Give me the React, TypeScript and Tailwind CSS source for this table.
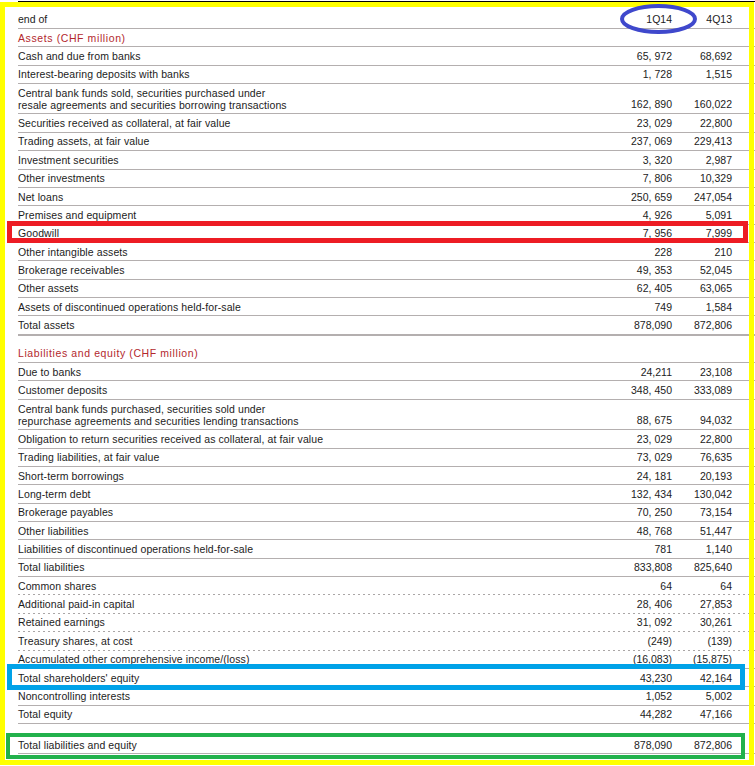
import React from "react";

type Line = "solid" | "thick" | "dotted";

type Row =
  | { type: "head" }
  | { type: "section"; label: string }
  | { type: "gap"; h: string }
  | {
      type: "item";
      label: string[];
      a: string;
      b: string;
      line?: Line;
      gap?: boolean;
    };

const item = (label: string | string[], a: string, b: string, opts: { line?: Line; gap?: boolean } = {}): Row => ({
  type: "item",
  label: Array.isArray(label) ? label : [label],
  a,
  b,
  ...opts,
});

const rows: Row[] = [
  { type: "head" },
  { type: "section", label: "Assets (CHF million)" },
  item("Cash and due from banks", "65,972", "68,692", { gap: true }),
  item("Interest-bearing deposits with banks", "1,728", "1,515", { gap: true }),
  item(
    ["Central bank funds sold, securities purchased under", "resale agreements and securities borrowing transactions"],
    "162,890",
    "160,022",
    { gap: true }
  ),
  item("Securities received as collateral, at fair value", "23,029", "22,800", { gap: true }),
  item("Trading assets, at fair value", "237,069", "229,413", { gap: true }),
  item("Investment securities", "3,320", "2,987", { gap: true }),
  item("Other investments", "7,806", "10,329", { gap: true }),
  item("Net loans", "250,659", "247,054", { gap: true }),
  item("Premises and equipment", "4,926", "5,091", { gap: true }),
  item("Goodwill", "7,956", "7,999", { gap: true }),
  item("Other intangible assets", "228", "210"),
  item("Brokerage receivables", "49,353", "52,045", { gap: true }),
  item("Other assets", "62,405", "63,065", { gap: true }),
  item("Assets of discontinued operations held-for-sale", "749", "1,584"),
  item("Total assets", "878,090", "872,806", { line: "thick" }),
  { type: "gap", h: "h-[9px]" },
  { type: "section", label: "Liabilities and equity (CHF million)" },
  item("Due to banks", "24,211", "23,108"),
  item("Customer deposits", "348,450", "333,089", { gap: true }),
  item(
    ["Central bank funds purchased, securities sold under", "repurchase agreements and securities lending transactions"],
    "88,675",
    "94,032",
    { gap: true }
  ),
  item("Obligation to return securities received as collateral, at fair value", "23,029", "22,800", { gap: true }),
  item("Trading liabilities, at fair value", "73,029", "76,635", { gap: true }),
  item("Short-term borrowings", "24,181", "20,193", { gap: true }),
  item("Long-term debt", "132,434", "130,042", { gap: true }),
  item("Brokerage payables", "70,250", "73,154", { gap: true }),
  item("Other liabilities", "48,768", "51,447", { gap: true }),
  item("Liabilities of discontinued operations held-for-sale", "781", "1,140"),
  item("Total liabilities", "833,808", "825,640"),
  item("Common shares", "64", "64", { line: "dotted" }),
  item("Additional paid-in capital", "28,406", "27,853", { line: "dotted", gap: true }),
  item("Retained earnings", "31,092", "30,261", { line: "dotted", gap: true }),
  item("Treasury shares, at cost", "(249)", "(139)", { line: "dotted" }),
  item("Accumulated other comprehensive income/(loss)", "(16,083)", "(15,875)"),
  item("Total shareholders' equity", "43,230", "42,164"),
  item("Noncontrolling interests", "1,052", "5,002"),
  item("Total equity", "44,282", "47,166"),
  { type: "gap", h: "h-[12px]" },
  item("Total liabilities and equity", "878,090", "872,806"),
];

function Separator({ line = "solid" }: { line?: Line }) {
  if (line === "dotted") {
    return (
      <div className="h-px bg-[linear-gradient(90deg,#aaa6a6_40%,transparent_40%)] bg-[length:5px_1px] bg-repeat-x" />
    );
  }
  return <div className={line === "thick" ? "h-[2px] bg-[#b4afaf]" : "h-px bg-[#b4afaf]"} />;
}

// numbers in the first column render with a small gap after the comma
function Num({ value, gap }: { value: string; gap?: boolean }) {
  if (!gap || !value.includes(",")) return <>{value}</>;
  const [head, tail] = value.split(",");
  return (
    <>
      {head}
      <span className="mr-[3px]">,</span>
      {tail}
    </>
  );
}

function TableRow({ row }: { row: Row }) {
  if (row.type === "gap") return <div className={row.h} />;

  if (row.type === "head") {
    return (
      <>
        <div className="flex h-[26px] items-end pb-[3px] pr-[23px] leading-[12px]">
          <div className="flex-1">end of</div>
          <div className="w-[80px] text-right">1Q14</div>
          <div className="w-[60px] text-right">4Q13</div>
        </div>
        <Separator />
      </>
    );
  }

  if (row.type === "section") {
    return (
      <>
        <div className="flex h-[17.36px] items-center leading-[12px] tracking-[0.6px] text-[#b3282d]">
          {row.label}
        </div>
        <Separator />
      </>
    );
  }

  const double = row.label.length > 1;
  const thick = row.line === "thick";
  return (
    <>
      <div
        className={`flex items-center pr-[23px] leading-[12px] ${
          double ? "h-[29.36px]" : "h-[17.36px]"
        }`}
      >
        <div className="flex-1 tracking-[0.1px]">
          {row.label.map((l) => (
            <div key={l}>{l}</div>
          ))}
        </div>
        <div className={`w-[80px] text-right ${double ? "self-end pb-[3px]" : ""}`}>
          <Num value={row.a} gap={row.gap} />
        </div>
        <div className={`w-[60px] text-right ${double ? "self-end pb-[3px]" : ""}`}>{row.b}</div>
      </div>
      <Separator line={thick ? "thick" : row.line} />
    </>
  );
}

export default function App() {
  return (
    <div className="relative h-[766px] w-[755px] overflow-hidden bg-white font-['Liberation_Sans',Arial,sans-serif] text-[10.5px] text-[#1c1c1c]">
      <div className="ml-[18px] mt-px w-[737px] border-t border-black">
        {rows.map((row, i) => (
          <TableRow key={i} row={row} />
        ))}
      </div>

      {/* annotations drawn over the table */}
      <div className="pointer-events-none absolute left-0 top-[2px] h-[763px] w-[754px] border-[5px] border-[#ffff00]" />
      <div className="pointer-events-none absolute left-[7px] top-[221px] h-[22px] w-[741px] border-[5px] border-[#ed1c24]" />
      <div className="pointer-events-none absolute left-[7px] top-[664px] h-[26px] w-[738px] border-[5px] border-[#00a2e8]" />
      <div className="pointer-events-none absolute left-[6px] top-[733px] h-[26px] w-[739px] border-[4px] border-[#22b14c]" />
      <svg className="pointer-events-none absolute left-[620px] top-[4px]" width="77" height="30" viewBox="0 0 77 30">
        <ellipse cx="38.5" cy="15" rx="36.5" ry="13" fill="none" stroke="#3f48cc" strokeWidth="4" />
      </svg>
    </div>
  );
}
